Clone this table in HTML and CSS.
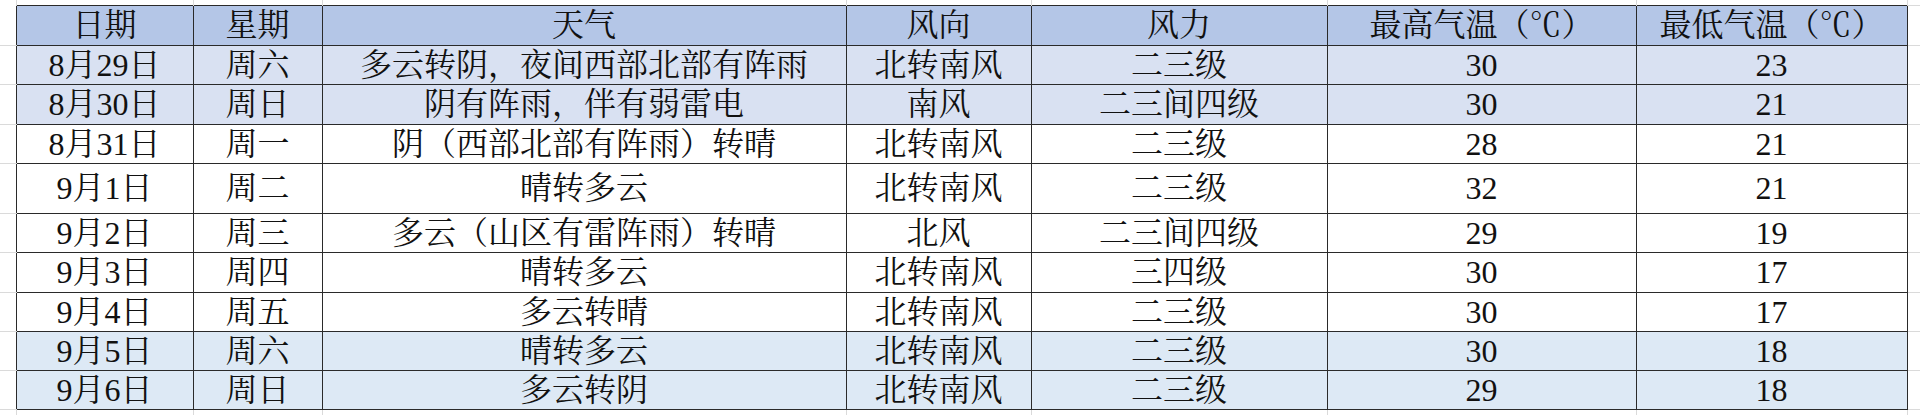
FILE: index.html
```html
<!DOCTYPE html>
<html lang="zh-CN">
<head>
<meta charset="utf-8">
<title>天气预报</title>
<link rel="stylesheet" href="styles.css">
</head>
<body>
<table class="sheet">
  <colgroup>
    <col class="c-edge-l">
    <col class="c-date">
    <col class="c-week">
    <col class="c-weather">
    <col class="c-dir">
    <col class="c-force">
    <col class="c-high">
    <col class="c-low">
    <col class="c-edge-r">
  </colgroup>
  <tr class="r-top">
    <td class="g-v"></td><td class="g-v"></td><td class="g-v"></td><td class="g-v"></td><td class="g-v"></td><td class="g-v"></td><td class="g-v"></td><td class="g-v"></td><td class="g-h"></td>
  </tr>
  <tr class="r-head">
    <td class="g-h"></td>
    <th class="cell">日期</th><th class="cell">星期</th><th class="cell">天气</th><th class="cell">风向</th><th class="cell">风力</th><th class="cell">最高气温（℃）</th><th class="cell">最低气温（℃）</th>
    <td class="g-h"></td>
  </tr>
  <tr class="r-row bg-lav">
    <td class="g-h"></td>
    <td class="cell">8月29日</td><td class="cell">周六</td><td class="cell">多云转阴，夜间西部北部有阵雨</td><td class="cell">北转南风</td><td class="cell">二三级</td><td class="cell">30</td><td class="cell">23</td>
    <td class="g-h"></td>
  </tr>
  <tr class="r-row-b bg-lav">
    <td class="g-h"></td>
    <td class="cell">8月30日</td><td class="cell">周日</td><td class="cell">阴有阵雨，伴有弱雷电</td><td class="cell">南风</td><td class="cell">二三间四级</td><td class="cell">30</td><td class="cell">21</td>
    <td class="g-h"></td>
  </tr>
  <tr class="r-row">
    <td class="g-h"></td>
    <td class="cell">8月31日</td><td class="cell">周一</td><td class="cell">阴（西部北部有阵雨）转晴</td><td class="cell">北转南风</td><td class="cell">二三级</td><td class="cell">28</td><td class="cell">21</td>
    <td class="g-h"></td>
  </tr>
  <tr class="r-tall">
    <td class="g-h"></td>
    <td class="cell">9月1日</td><td class="cell">周二</td><td class="cell">晴转多云</td><td class="cell">北转南风</td><td class="cell">二三级</td><td class="cell">32</td><td class="cell">21</td>
    <td class="g-h"></td>
  </tr>
  <tr class="r-row">
    <td class="g-h"></td>
    <td class="cell">9月2日</td><td class="cell">周三</td><td class="cell">多云（山区有雷阵雨）转晴</td><td class="cell">北风</td><td class="cell">二三间四级</td><td class="cell">29</td><td class="cell">19</td>
    <td class="g-h"></td>
  </tr>
  <tr class="r-row-b">
    <td class="g-h"></td>
    <td class="cell">9月3日</td><td class="cell">周四</td><td class="cell">晴转多云</td><td class="cell">北转南风</td><td class="cell">三四级</td><td class="cell">30</td><td class="cell">17</td>
    <td class="g-h"></td>
  </tr>
  <tr class="r-row">
    <td class="g-h"></td>
    <td class="cell">9月4日</td><td class="cell">周五</td><td class="cell">多云转晴</td><td class="cell">北转南风</td><td class="cell">二三级</td><td class="cell">30</td><td class="cell">17</td>
    <td class="g-h"></td>
  </tr>
  <tr class="r-row bg-sky">
    <td class="g-h"></td>
    <td class="cell">9月5日</td><td class="cell">周六</td><td class="cell">晴转多云</td><td class="cell">北转南风</td><td class="cell">二三级</td><td class="cell">30</td><td class="cell">18</td>
    <td class="g-h"></td>
  </tr>
  <tr class="r-row bg-sky">
    <td class="g-h"></td>
    <td class="cell">9月6日</td><td class="cell">周日</td><td class="cell">多云转阴</td><td class="cell">北转南风</td><td class="cell">二三级</td><td class="cell">29</td><td class="cell">18</td>
    <td class="g-h"></td>
  </tr>
  <tr class="r-bottom">
    <td class="g-v"></td><td class="g-v"></td><td class="g-v"></td><td class="g-v"></td><td class="g-v"></td><td class="g-v"></td><td class="g-v"></td><td class="g-v"></td><td></td>
  </tr>
</table>
</body>
</html>
```
FILE: styles.css
```css
html, body {
  margin: 0;
  padding: 0;
  background: #ffffff;
}

.sheet {
  border-collapse: collapse;
  table-layout: fixed;
  width: 1920px;
  font-family: "Liberation Serif", "Noto Serif CJK SC", "Noto Sans CJK SC", serif;
  font-size: 32px;
  color: #111111;
}

.c-edge-l { width: 16px; }
.c-date { width: 177px; }
.c-week { width: 129px; }
.c-weather { width: 524px; }
.c-dir { width: 185px; }
.c-force { width: 296px; }
.c-high { width: 309px; }
.c-low { width: 271px; }
.c-edge-r { width: 13px; }

.sheet td, .sheet th {
  padding: 0;
}

.r-top { height: 5px; }
.r-head { height: 40px; background: #b4c6e7; }
.r-row { height: 39px; }
.r-row-b { height: 40px; }
.r-tall { height: 50px; }
.r-bottom { height: 6px; }

.bg-lav { background: #d9e1f2; }
.bg-sky { background: #dde9f5; }

.r-head .g-h,
.bg-lav .g-h,
.bg-sky .g-h {
  background: #ffffff;
}

.cell {
  border: 1px solid #2a2a2a;
  text-align: center;
  vertical-align: middle;
  font-weight: normal;
  line-height: 32px;
  padding-top: 5px;
  white-space: nowrap;
  overflow: hidden;
}

.g-v {
  border-right: 1px solid #dadada;
}

.g-h {
  border-bottom: 1px solid #dadada;
}
```
